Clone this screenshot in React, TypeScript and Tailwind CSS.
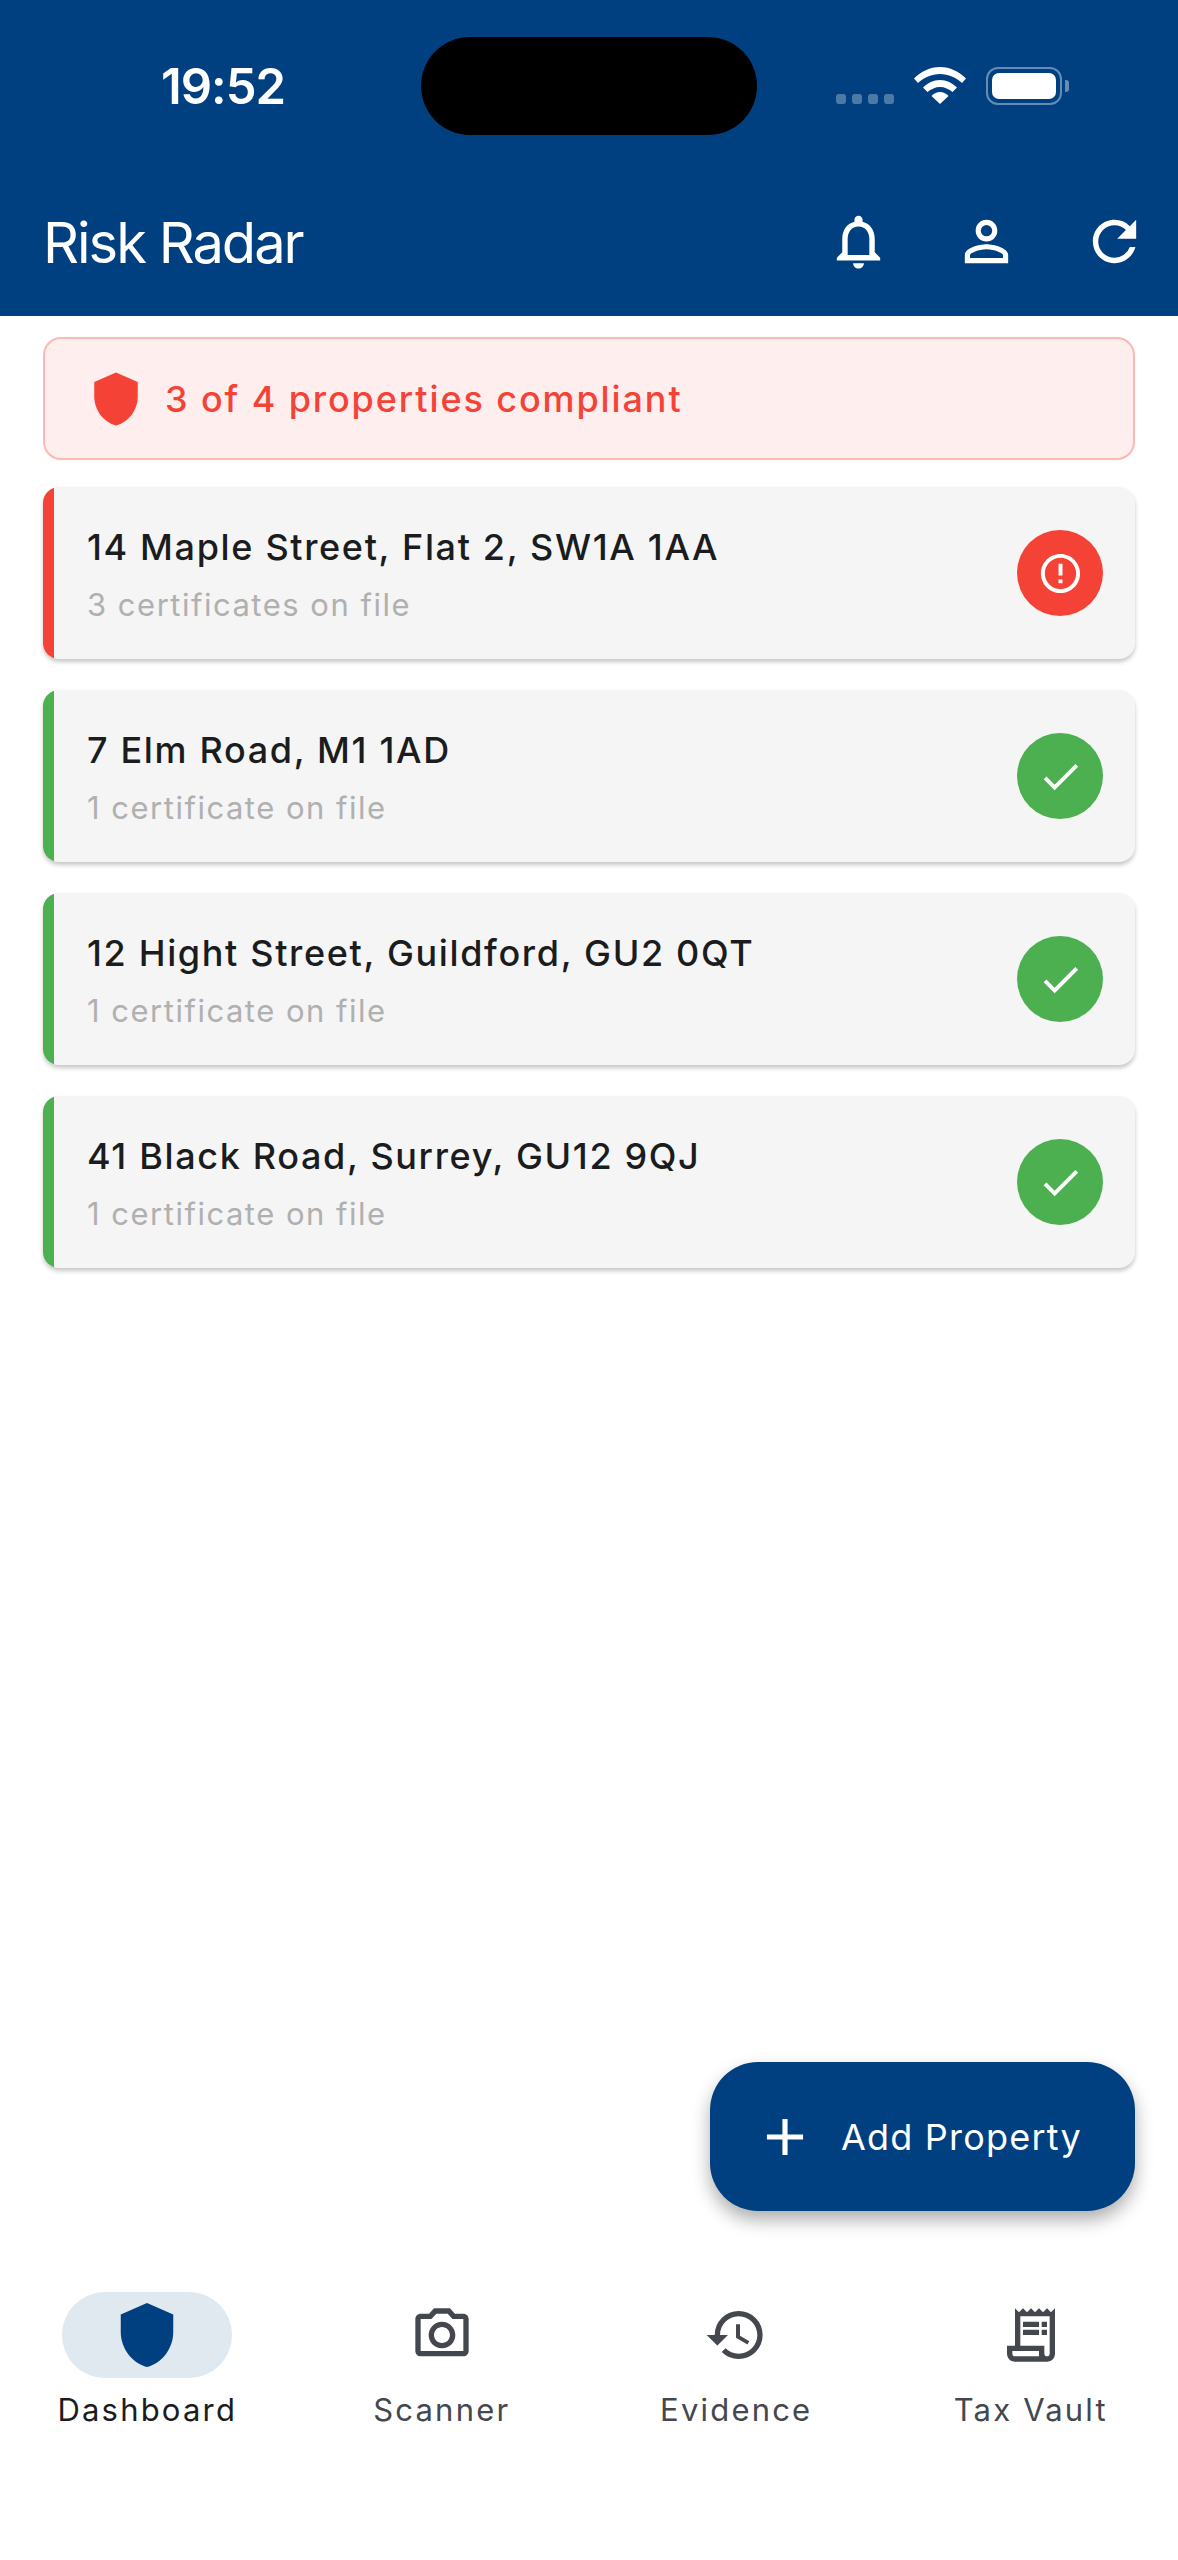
import React from "react";
import { MdNotificationsNone, MdPersonOutline, MdRefresh, MdOutlineCameraAlt, MdHistory, MdOutlineReceiptLong, MdShield, MdCheck, MdErrorOutline, MdAdd } from "react-icons/md";

const font = { fontFamily: '"Inter", "Liberation Sans", sans-serif' };

function StatusBar() {
  return (
    <div className="relative h-[172px] shrink-0">
      <div className="absolute left-[161px] top-[60px] text-[49px] leading-[54px] font-semibold tracking-[-1px] text-white">19:52</div>
      <div className="absolute left-[421px] top-[37px] w-[336px] h-[98px] rounded-[49px] bg-black" />
      <div className="absolute left-[836px] top-[94px] flex gap-[6px]">
        {[0, 1, 2, 3].map((i) => (
          <div key={i} className="w-[10px] h-[10px] rounded-[3px] bg-white/30" />
        ))}
      </div>
      <svg className="absolute left-[914px] top-[67px]" width="52" height="37" viewBox="0 0 52 37">
        <path d="M0 11.5C7 4.5 16 0 26 0s19 4.5 26 11.5l-4 4.5C42 10.500 34.500 7 26 7S10 10.500 4 16z" fill="#fff" />
        <path d="M9 20.500C13.500 16 19.500 13 26 13s12.500 3 17 7.500l-4.500 4.500C35 22 30.500 20 26 20s-9 2-12.500 5z" fill="#fff" />
        <path d="M17.500 29C20 26.500 23 25 26 25s6 1.500 8.500 4L26 37z" fill="#fff" />
      </svg>
      <div className="absolute left-[986px] top-[67px] w-[76px] h-[38px] rounded-[12px] border-2 border-white/40 p-[4px]">
        <div className="w-full h-full rounded-[7px] bg-white" />
      </div>
      <div className="absolute left-[1065px] top-[80px] w-[4px] h-[12px] rounded-r-[3px] bg-white/40" />
    </div>
  );
}

function Card({ title, sub, ok }: { title: string; sub: string; ok: boolean }) {
  return (
    <div className="h-[172px] rounded-[16px] bg-[#f5f5f5] shadow-[0_3px_4px_rgba(0,0,0,0.22)] overflow-hidden flex items-stretch">
      <div className={`w-[11px] shrink-0 ${ok ? "bg-[#4caf50]" : "bg-[#f44336]"}`} />
      <div className="flex-1 flex items-center justify-between pl-[33px] pr-[32px]">
        <div className="flex flex-col pt-[4px]">
          <div className="text-[36px] leading-[44px] font-medium tracking-[1.65px] text-[#1a1c1e]">{title}</div>
          <div className="text-[31px] leading-[40px] tracking-[1.5px] text-[#b0b0b0] mt-[16px]">{sub}</div>
        </div>
        <div className={`w-[86px] h-[86px] rounded-full flex items-center justify-center text-white ${ok ? "bg-[#4caf50]" : "bg-[#f44336]"}`}>
          {ok ? <MdCheck size={47} /> : <MdErrorOutline size={47} />}
        </div>
      </div>
    </div>
  );
}

function NavItem({ label, icon, active }: { label: string; icon: React.ReactNode; active?: boolean }) {
  return (
    <div className="flex-1 flex flex-col items-center">
      <div className={`w-[170px] h-[86px] rounded-[43px] flex items-center justify-center ${active ? "bg-[#e0e8f0] text-[#004080]" : "text-[#44484e]"}`}>{icon}</div>
      <div className={`mt-[12px] text-[31px] leading-[40px] tracking-[2.2px] ${active ? "text-[#1a1c1e]" : "text-[#44484e]"}`}>{label}</div>
    </div>
  );
}

export default function App() {
  return (
    <div className="relative w-[1178px] h-[2560px] bg-white flex flex-col overflow-hidden" style={font}>
      <header className="h-[316px] shrink-0 bg-[#004080] flex flex-col">
        <StatusBar />
        <div className="h-[144px] flex items-start justify-between pl-[43px] pr-[42px] text-white">
          <div className="text-[56px] leading-[68px] tracking-[-2px] mt-[37px]">Risk Radar</div>
          <div className="flex items-center gap-[63px] mt-[37px] text-white -mr-[11px]">
            <MdNotificationsNone size={65} />
            <MdPersonOutline size={65} />
            <MdRefresh size={65} />
          </div>
        </div>
      </header>

      <main className="flex-1 px-[43px] pt-[21px] flex flex-col">
        <div className="h-[123px] rounded-[18px] border-2 border-[#fdb8b3] bg-[#feeeed] flex items-center pl-[45px] gap-[20px] text-[#f44336]">
          <MdShield size={58} className="-ml-[3px]" />
          <div className="text-[36px] leading-[44px] font-medium tracking-[1.9px]">3 of 4 properties compliant</div>
        </div>
        <div className="mt-[27px] flex flex-col gap-[31px]">
          <Card title="14 Maple Street, Flat 2, SW1A 1AA" sub="3 certificates on file" ok={false} />
          <Card title="7 Elm Road, M1 1AD" sub="1 certificate on file" ok />
          <Card title="12 Hight Street, Guildford, GU2 0QT" sub="1 certificate on file" ok />
          <Card title="41 Black Road, Surrey, GU12 9QJ" sub="1 certificate on file" ok />
        </div>
      </main>

      <div className="absolute left-[710px] top-[2062px] w-[425px] h-[149px] rounded-[48px] bg-[#004080] shadow-[0_9px_18px_rgba(0,0,0,0.32)] flex items-center text-white pl-[44px]">
        <MdAdd size={62} />
        <span className="ml-[25px] text-[36px] leading-[44px] tracking-[1.2px]">Add Property</span>
      </div>

      <nav className="h-[268px] shrink-0 flex items-start pt-0">
        <NavItem label="Dashboard" active icon={<MdShield size={70} />} />
        <NavItem label="Scanner" icon={<MdOutlineCameraAlt size={64} />} />
        <NavItem label="Evidence" icon={<MdHistory size={64} />} />
        <NavItem label="Tax Vault" icon={<MdOutlineReceiptLong size={64} />} />
      </nav>
    </div>
  );
}
